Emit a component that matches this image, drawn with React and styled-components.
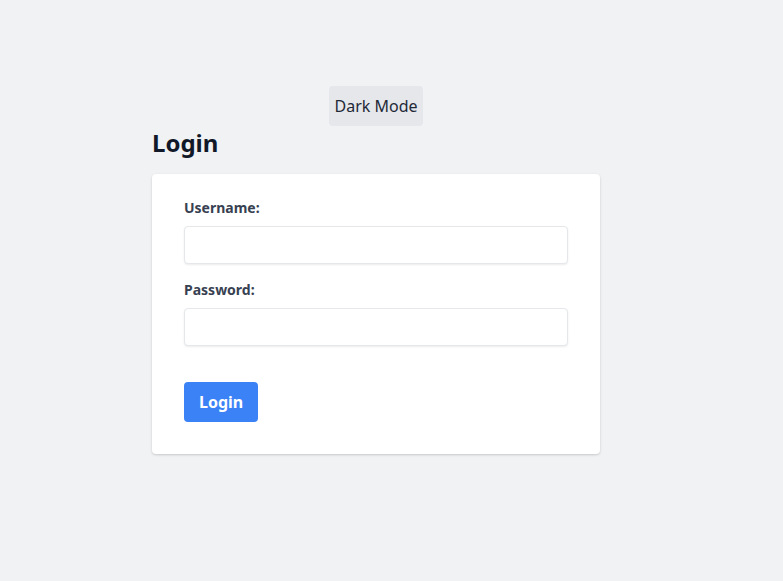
import React, { useState } from "react";
import styled, { createGlobalStyle } from "styled-components";

const GlobalStyle = createGlobalStyle`
  html, body {
    margin: 0;
    padding: 0;
    background: #f0f2f4;
    font-family: "Segoe UI", "Noto Sans", "Open Sans", sans-serif;
  }
`;

const Page = styled.div`
  min-height: 581px;
  padding: 86px 0 0 152px;
  box-sizing: border-box;
`;

const Wrapper = styled.div`
  width: 448px;
  display: flex;
  flex-direction: column;
`;

const ToggleButton = styled.button`
  align-self: center;
  height: 40px;
  padding: 0 5px;
  border: none;
  border-radius: 4px;
  background: #e5e7eb;
  color: #1f2937;
  font-family: inherit;
  font-size: 16px;
  cursor: pointer;
`;

const Title = styled.h2`
  margin: 2px 0 17px;
  font-size: 24px;
  line-height: 29px;
  font-weight: 700;
  color: #111827;
`;

const Card = styled.form`
  background: #fff;
  border-radius: 4px;
  box-shadow: 0 1px 3px rgba(0, 0, 0, 0.12), 0 1px 2px rgba(0, 0, 0, 0.06);
  padding: 24px 32px 32px;
`;

const Field = styled.div`
  display: flex;
  flex-direction: column;
  margin-bottom: ${(props) => (props.last ? "36px" : "16px")};
`;

const Label = styled.label`
  font-size: 14px;
  line-height: 20px;
  font-weight: 700;
  color: #374151;
  margin-bottom: 8px;
`;

const Input = styled.input`
  height: 38px;
  box-sizing: border-box;
  border: 1px solid #e5e7eb;
  border-radius: 4px;
  box-shadow: 0 1px 2px rgba(0, 0, 0, 0.08);
  padding: 0 12px;
  font-size: 14px;
  outline: none;
`;

const SubmitButton = styled.button`
  height: 40px;
  padding: 0 15px;
  border: none;
  border-radius: 4px;
  background: #3b82f6;
  color: #fff;
  font-family: inherit;
  font-size: 16px;
  font-weight: 700;
  cursor: pointer;
`;

export default function App() {
  const [dark, setDark] = useState(false);
  return (
    <>
      <GlobalStyle />
      <Page>
        <Wrapper>
          <ToggleButton onClick={() => setDark(!dark)}>
            {dark ? "Light Mode" : "Dark Mode"}
          </ToggleButton>
          <Title>Login</Title>
          <Card onSubmit={(e) => e.preventDefault()}>
            <Field>
              <Label>Username:</Label>
              <Input type="text" />
            </Field>
            <Field last>
              <Label>Password:</Label>
              <Input type="password" />
            </Field>
            <SubmitButton type="submit">Login</SubmitButton>
          </Card>
        </Wrapper>
      </Page>
    </>
  );
}
